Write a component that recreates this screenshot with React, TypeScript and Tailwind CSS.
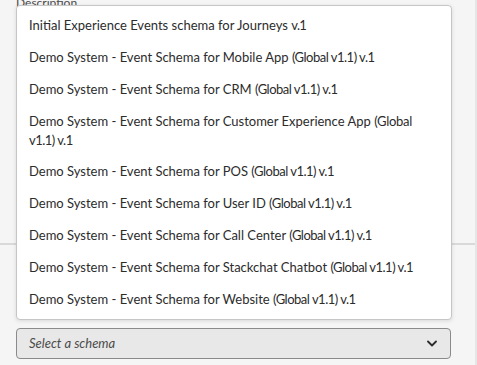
import React from "react";

const items: string[] = [
  "Initial Experience Events schema for Journeys v.1",
  "Demo System - Event Schema for Mobile App (Global v1.1) v.1",
  "Demo System - Event Schema for CRM (Global v1.1) v.1",
  "Demo System - Event Schema for Customer Experience App (Global v1.1) v.1",
  "Demo System - Event Schema for POS (Global v1.1) v.1",
  "Demo System - Event Schema for User ID (Global v1.1) v.1",
  "Demo System - Event Schema for Call Center (Global v1.1) v.1",
  "Demo System - Event Schema for Stackchat Chatbot (Global v1.1) v.1",
  "Demo System - Event Schema for Website (Global v1.1) v.1",
];

function Label({ text }: { text: string }) {
  const g = " (Global v1.1) v.1";
  if (text.endsWith(g)) {
    return (
      <>
        {text.slice(0, text.length - g.length)}{" "}
        <span className="tracking-[-0.5px]">(Global v1.1) v.1</span>
      </>
    );
  }
  if (text.endsWith(" v.1")) {
    return (
      <>
        {text.slice(0, text.length - 4)}{" "}
        <span className="tracking-[-0.6px]">v.1</span>
      </>
    );
  }
  return <>{text}</>;
}

export default function App() {
  return (
    <div
      className="relative h-[365px] w-full overflow-hidden bg-[#f5f5f5] border-r-2 border-[#e6e6e6]"
      style={{ fontFamily: 'Lato, "Noto Sans", sans-serif' }}
    >
      <div className="flex flex-col">
        <div className="h-[243px] px-4">
          <div className="-mt-[5px] text-[12px] leading-[16px] text-[#4b4b4b]">Description</div>
        </div>
        <div className="h-[2px] bg-[#d9d9d9]" />
        <div className="px-4 pt-[83px]">
          <button className="flex h-[31px] w-[435px] items-center justify-between rounded-[4px] border border-[#8a8a8a] bg-[#e8e8e8] pl-3 pr-[13px] text-left">
            <span className="text-[13px] italic text-[#4b4b4b]">Select a schema</span>
            <svg width="10" height="7" viewBox="0 0 10 7" fill="none">
              <path d="M1 1.5 L5 5.5 L9 1.5" stroke="#2c2c2c" strokeWidth="1.8" strokeLinecap="round" strokeLinejoin="round" />
            </svg>
          </button>
        </div>
      </div>

      <div className="absolute left-4 top-[5px] w-[436px] rounded-[4px] border border-[#c6c6c6] bg-white pt-[4px] pb-[3px] shadow-[0_1px_4px_rgba(0,0,0,0.12)]">
        {items.map((t, i) =>
          i === 3 ? (
            <div key={i} className="whitespace-nowrap py-[6px] pl-3 pr-3 text-[13px] leading-[19px] text-[#2c2c2c]">
              Demo System - Event Schema for Customer Experience App{" "}
              <span className="tracking-[-0.3px]">(Global</span>
              <br />
              <span className="tracking-[-0.5px]">v1.1) v.1</span>
            </div>
          ) : (
            <div
              key={i}
              className="flex h-[32px] items-center whitespace-nowrap pl-3 pr-3 text-[13px] text-[#2c2c2c]"
            >
              <span>
                <Label text={t} />
              </span>
            </div>
          )
        )}
      </div>
    </div>
  );
}
